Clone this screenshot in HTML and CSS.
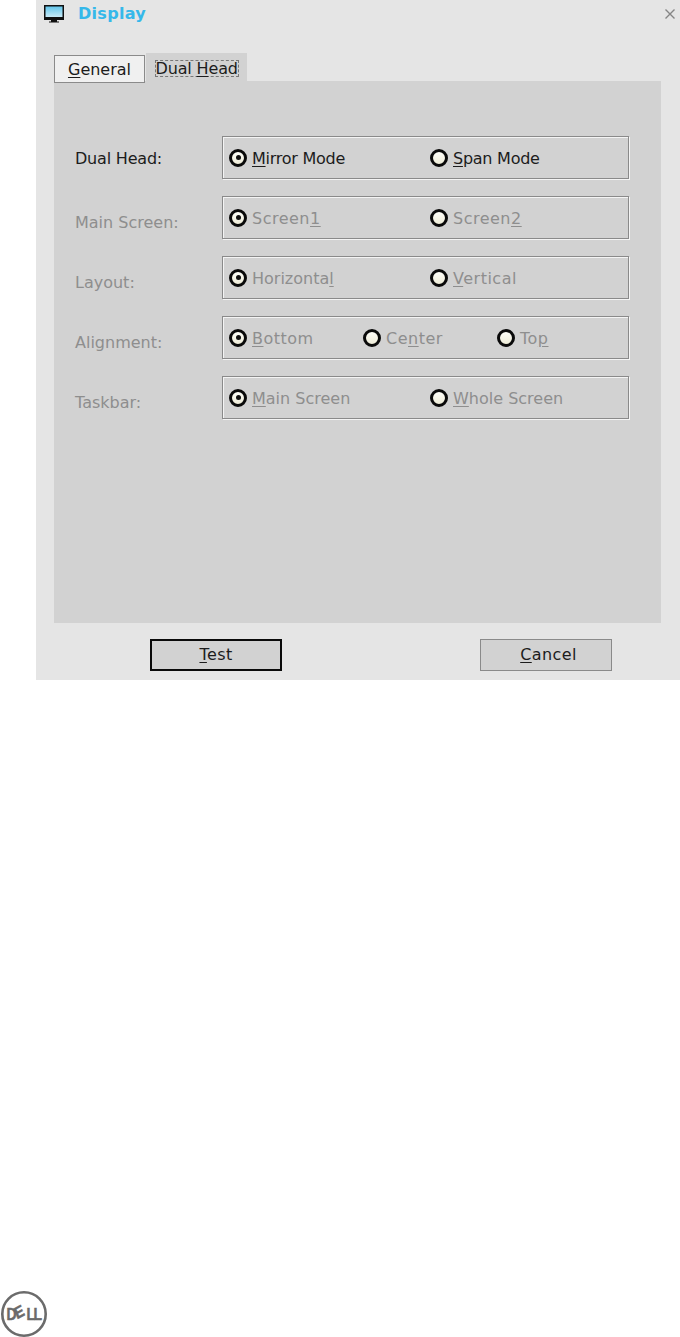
FILE: index.html
```html
<!DOCTYPE html>
<html lang="en">
<head>
  <meta charset="UTF-8">
  <title>Display</title>
  <link rel="stylesheet" href="styles.css">
</head>
<body>

  <div class="window">
    <div class="titlebar">
      <svg class="title-icon" width="20" height="18" viewBox="0 0 20 18">
        <defs>
          <linearGradient id="screen" x1="0" y1="0" x2="0" y2="1">
            <stop offset="0" stop-color="#5cc3ea"/>
            <stop offset="1" stop-color="#d4eef8"/>
          </linearGradient>
        </defs>
        <rect x="0.75" y="0.75" width="18.5" height="12.5" fill="url(#screen)" stroke="#111" stroke-width="1.5"/>
        <rect x="0" y="12" width="20" height="3" fill="#111"/>
        <path d="M7 15h6v1.5h2v1H5v-1h2z" fill="#111"/>
      </svg>
      <span class="title-text">Display</span>
      <svg class="close-icon" width="10" height="10" viewBox="0 0 10 10">
        <path d="M0.5 0.5L9.5 9.5M9.5 0.5L0.5 9.5" stroke="#858585" stroke-width="1.4"/>
      </svg>
    </div>

    <div class="tabs">
      <div class="tab"><u>G</u>eneral</div>
      <div class="tab tab-active"><span class="focus-rect">Dual <u>H</u>ead</span></div>
    </div>

    <div class="panel">
      <div class="row active">
        <div class="row-label">Dual Head:</div>
        <div class="group">
          <label class="radio"><i class="dot"></i><span><u>M</u>irror Mode</span></label>
          <label class="radio"><i class="dot off"></i><span><u>S</u>pan Mode</span></label>
        </div>
      </div>
      <div class="row disabled">
        <div class="row-label">Main Screen:</div>
        <div class="group">
          <label class="radio"><i class="dot"></i><span class="wide">Screen<u>1</u></span></label>
          <label class="radio"><i class="dot off"></i><span class="wide">Screen<u>2</u></span></label>
        </div>
      </div>
      <div class="row disabled">
        <div class="row-label">Layout:</div>
        <div class="group">
          <label class="radio"><i class="dot"></i><span>Horizonta<u>l</u></span></label>
          <label class="radio"><i class="dot off"></i><span class="wide"><u>V</u>ertical</span></label>
        </div>
      </div>
      <div class="row disabled">
        <div class="row-label">Alignment:</div>
        <div class="group group-three">
          <label class="radio"><i class="dot"></i><span class="wide"><u>B</u>ottom</span></label>
          <label class="radio"><i class="dot off"></i><span class="wide">Ce<u>n</u>ter</span></label>
          <label class="radio"><i class="dot off"></i><span class="wide">To<u>p</u></span></label>
        </div>
      </div>
      <div class="row disabled">
        <div class="row-label">Taskbar:</div>
        <div class="group">
          <label class="radio"><i class="dot"></i><span><u>M</u>ain Screen</span></label>
          <label class="radio"><i class="dot off"></i><span><u>W</u>hole Screen</span></label>
        </div>
      </div>
    </div>

    <div class="buttons">
      <button class="btn btn-default" type="button"><u>T</u>est</button>
      <button class="btn btn-cancel" type="button"><u>C</u>ancel</button>
    </div>
  </div>

  <svg class="logo" width="48" height="46" viewBox="0 0 48 46">
    <circle cx="24" cy="23" r="21.7" fill="none" stroke="#6b6b6b" stroke-width="2.6"/>
    <text class="logo-text" transform="translate(6.5 29) scale(1 1.2)" x="0 10.5 20 27" y="0 -0.5 0 0" rotate="0 -25 0 0">DELL</text>
  </svg>

</body>
</html>
```

FILE: styles.css
```css
body {
  margin: 0;
  background: #fff;
  font-family: "DejaVu Sans", sans-serif;
  font-size: 16px;
  color: #1c1c1c;
}
u {
  text-underline-offset: 2px;
}
.window {
  margin-left: 36px;
  height: 680px;
  background: #e5e5e5;
  display: flex;
  flex-direction: column;
  padding-left: 18px;
  padding-right: 19px;
  box-sizing: border-box;
}
.titlebar {
  height: 53px;
  display: flex;
  align-items: flex-start;
  margin-left: -10px;
  margin-right: -14px;
  padding-top: 5px;
  box-sizing: border-box;
}
.title-text {
  margin-left: 14px;
  font-size: 16px;
  line-height: 17px;
  font-weight: bold;
  letter-spacing: 0.3px;
  color: #35b8ea;
}
.close-icon {
  margin-left: auto;
  margin-top: 4px;
}
.tabs {
  display: flex;
  height: 28px;
  gap: 1px;
}
.tab {
  width: 91px;
  height: 28px;
  margin-top: 2px;
  box-sizing: border-box;
  border: 1px solid #8a8a8a;
  background: #f0f0f0;
  text-align: center;
  line-height: 28px;
  position: relative;
  z-index: 1;
}
.tab-active {
  width: 101px;
  margin-top: 0;
  border: none;
  background: #d2d2d2;
  padding-top: 7px;
  line-height: 17px;
}
.focus-rect {
  display: inline-block;
  border: 1px dashed #777;
  padding: 0;
  height: 17px;
  width: 84px;
  box-sizing: border-box;
  line-height: 15px;
  letter-spacing: -0.15px;
  white-space: nowrap;
}
.panel {
  height: 542px;
  background: #d2d2d2;
  box-sizing: border-box;
  padding: 55px 31px 0 21px;
  display: flex;
  flex-direction: column;
  gap: 17px;
}
.row {
  display: flex;
  align-items: center;
  height: 43px;
}
.row-label {
  width: 147px;
  padding-top: 2px;
}
.active .radio span {
  letter-spacing: -0.25px;
}
.active .row-label {
  letter-spacing: -0.2px;
}
.disabled {
  color: #8e8e8e;
}
.disabled .row-label {
  padding-top: 10px;
}
.wide {
  letter-spacing: 0.5px;
}
.group {
  width: 407px;
  height: 43px;
  box-sizing: border-box;
  border: 1px solid #8a8a8a;
  box-shadow: 1px 1px 0 #f4f4f4, inset 1px 1px 0 #f4f4f4;
  padding-left: 6px;
  display: grid;
  grid-template-columns: repeat(2, 201px);
  align-items: center;
}
.group-three {
  grid-template-columns: repeat(3, 134px);
}
.radio {
  display: flex;
  align-items: center;
  gap: 5px;
}
.radio span {
  padding-top: 2px;
}
.dot {
  width: 18px;
  height: 18px;
  box-sizing: border-box;
  border: 3px solid #0a0a0a;
  border-radius: 50%;
  background: linear-gradient(#fdfdf8, #eeecd8);
  display: flex;
  align-items: center;
  justify-content: center;
  flex: none;
}
.dot::after {
  content: "";
  width: 5px;
  height: 5px;
  border-radius: 50%;
  background: #111;
}
.dot.off::after {
  display: none;
}
.buttons {
  display: flex;
  padding-top: 16px;
  padding-left: 96px;
  gap: 198px;
}
.btn {
  width: 132px;
  height: 32px;
  box-sizing: border-box;
  border: 1px solid #8a8a8a;
  background: #d2d2d2;
  font-family: inherit;
  font-size: 16px;
  letter-spacing: 0.4px;
  color: #1c1c1c;
  padding: 0 0 2px;
}
.btn-default {
  border: 2px solid #0a0a0a;
}
.btn-cancel {
  padding-left: 5px;
}
.logo {
  display: block;
  margin-top: 611px;
}
.logo-text {
  font-family: "Liberation Sans", sans-serif;
  font-size: 14px;
  font-weight: bold;
  fill: #6b6b6b;
  stroke: #6b6b6b;
  stroke-width: 0.4px;
}
```
